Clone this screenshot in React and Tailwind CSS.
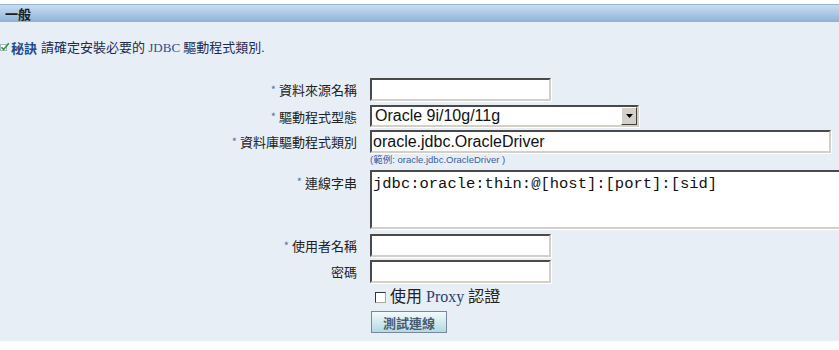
const cjk = '"Noto Sans CJK TC", "Noto Sans CJK SC", sans-serif';
const mixed = '"Liberation Serif", "Noto Sans CJK TC", serif';

function Label({ text, required = true, top = false }) {
  return (
    <div
      className={`w-[357px] shrink-0 flex justify-end text-[13px] text-[#222] leading-none ${top ? 'items-start pt-[6px]' : 'items-center'}`}
      style={{ fontFamily: cjk }}
    >
      {required && <span className="text-[#4d77a8] text-[11px] mr-[3px]">*</span>}
      <span>{text}</span>
    </div>
  );
}

function Inset({ className = '', children }) {
  return (
    <div
      className={`ml-[13px] bg-white border-2 border-t-[#4a4a4a] border-l-[#4a4a4a] border-r-[#d4d0c8] border-b-[#d4d0c8] shadow-[1px_1px_0_#ffffff] ${className}`}
    >
      {children}
    </div>
  );
}

function TipIcon() {
  return (
    <svg width="10" height="10" viewBox="0 0 10 10" className="shrink-0">
      <rect x="0.5" y="2.5" width="6" height="6" fill="#ffffff" stroke="#a9b6c4" />
      <path d="M1.5 5.2 L3.6 7.6 L8.8 1.2" fill="none" stroke="#2f9a2f" strokeWidth="1.6" />
    </svg>
  );
}

export default function App() {
  return (
    <div className="w-[839px] h-[350px] overflow-hidden bg-white pt-[4px]">
      <div className="h-[337px] bg-[#e8eef6]">
        <div className="h-[18px] border-t border-[#97b5d3] bg-gradient-to-b from-[#c9ddf1] to-[#8eb3d8] flex items-center pl-[5px]">
          <span className="text-[13px] font-bold text-[#1c1c1c] leading-none" style={{ fontFamily: cjk }}>
            一般
          </span>
        </div>

        <div className="mt-[18px] h-[14px] flex items-center text-[13px] leading-none" style={{ fontFamily: mixed }}>
          <TipIcon />
          <span className="ml-[1px] font-bold text-[#1f4a8a]" style={{ fontFamily: cjk }}>秘訣</span>
          <span className="ml-[4px] text-[#1d2b4f]">請確定安裝必要的 <span className="text-[#2a4f8f]">JDBC</span> 驅動程式類別.</span>
        </div>

        <div className="mt-[24px] flex h-[23px]">
          <Label text="資料來源名稱" />
          <Inset className="w-[181px] h-[23px]" />
        </div>

        <div className="mt-[4px] flex h-[22px]">
          <Label text="驅動程式型態" />
          <Inset className="w-[269px] h-[22px] flex items-center">
            <span className="pl-[3px] text-[16px] text-[#111] leading-none flex-1" style={{ fontFamily: '"Liberation Sans", Arial, sans-serif' }}>
              Oracle 9i/10g/11g
            </span>
            <span className="w-[16px] h-[18px] bg-[#d4d0c8] border border-t-[#ffffff] border-l-[#ffffff] border-r-[#404040] border-b-[#404040] flex items-center justify-center">
              <svg width="7" height="4" viewBox="0 0 7 4">
                <path d="M0 0 H7 L3.5 4 Z" fill="#000" />
              </svg>
            </span>
          </Inset>
        </div>

        <div className="mt-[3px] flex h-[23px]">
          <Label text="資料庫驅動程式類別" />
          <Inset className="w-[461px] h-[23px] flex items-center">
            <span className="pl-[1px] text-[16px] text-[#111] leading-none" style={{ fontFamily: '"Liberation Sans", Arial, sans-serif' }}>
              oracle.jdbc.OracleDriver
            </span>
          </Inset>
        </div>

        <div className="mt-[1px] flex h-[12px]">
          <div className="w-[357px] shrink-0" />
          <div className="ml-[13px] text-[9.5px] text-[#3a5da0] leading-none flex items-center" style={{ fontFamily: '"Liberation Sans", "Noto Sans CJK TC", sans-serif' }}>
            (範例: oracle.jdbc.OracleDriver )
          </div>
        </div>

        <div className="mt-[4px] flex h-[59px]">
          <Label text="連線字串" top />
          <Inset className="w-[480px] h-[59px] border-r-0 pt-[4px] pl-[1px]">
            <div className="text-[15.5px] text-[#111] leading-[17px]" style={{ fontFamily: '"Liberation Mono", "Courier New", monospace' }}>
              jdbc:oracle:thin:@[host]:[port]:[sid]
            </div>
          </Inset>
        </div>

        <div className="mt-[5px] flex h-[23px]">
          <Label text="使用者名稱" />
          <Inset className="w-[181px] h-[23px]" />
        </div>

        <div className="mt-[3px] flex h-[23px]">
          <Label text="密碼" required={false} />
          <Inset className="w-[181px] h-[23px]" />
        </div>

        <div className="mt-[5px] flex h-[18px] items-center">
          <div className="w-[357px] shrink-0" />
          <span className="ml-[18px] w-[11px] h-[11px] bg-white border border-t-[#333] border-l-[#333] border-r-[#aaa] border-b-[#aaa]" />
          <span className="ml-[4px] text-[16px] text-[#222] leading-none" style={{ fontFamily: mixed }}>
            使用 <span className="text-[#2a3f70]">Proxy</span> 認證
          </span>
        </div>

        <div className="mt-[5px] flex h-[22px]">
          <div className="w-[357px] shrink-0" />
          <button
            type="button"
            className="ml-[14px] w-[76px] h-[22px] border border-[#77889a] bg-gradient-to-b from-[#f2fafc] to-[#b3d9e3] text-[13px] font-bold text-[#4b5b70] leading-none"
            style={{ fontFamily: cjk }}
          >
            測試連線
          </button>
        </div>
      </div>
    </div>
  );
}
